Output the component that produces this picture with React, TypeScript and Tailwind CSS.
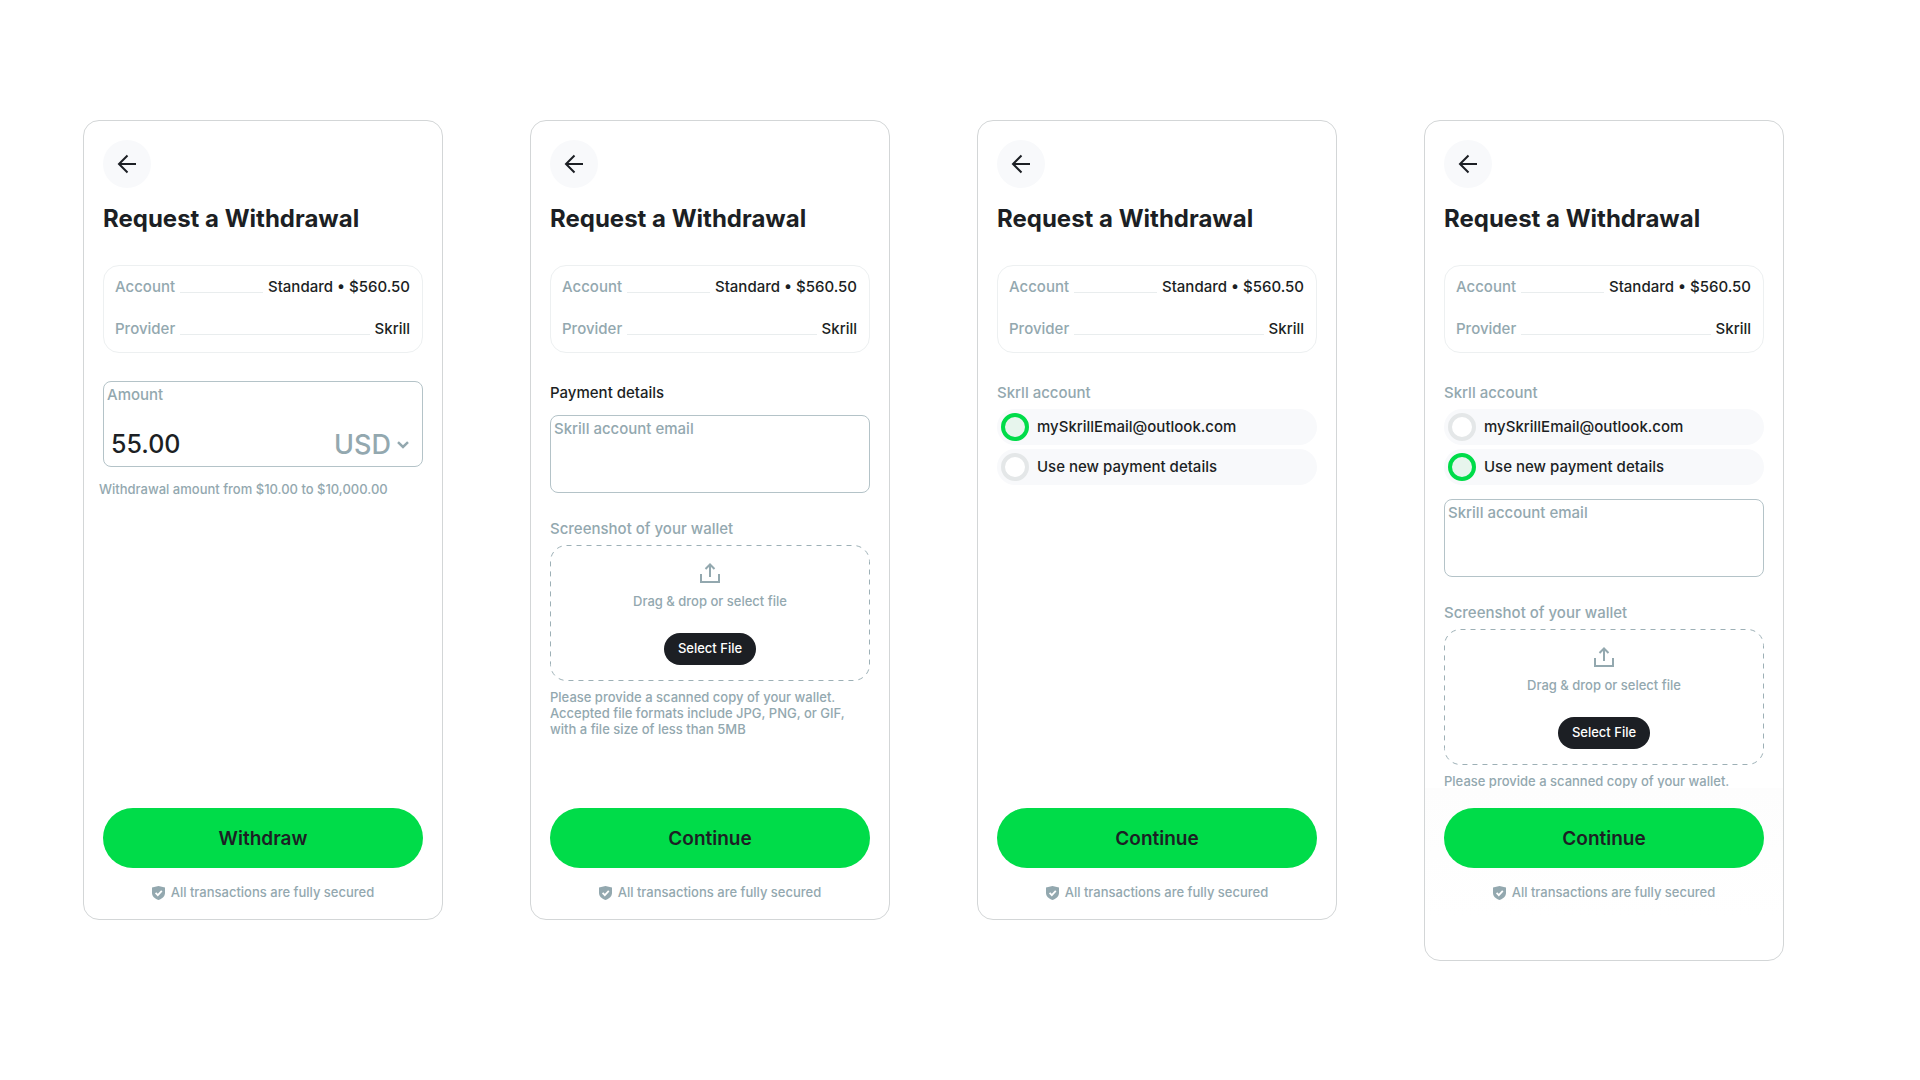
import { useId, useState } from 'react';
import type { ReactNode } from 'react';

const BackIcon = () => (
    <svg width="24" height="24" viewBox="0 0 24 24" fill="none" stroke="currentColor" strokeWidth="2" aria-hidden="true">
        <path d="M21 12H4M12.5 3.5L4 12l8.5 8.5" />
    </svg>
);

const UploadIcon = () => (
    <svg width="20" height="20" viewBox="0 0 20 20" fill="none" stroke="currentColor" strokeWidth="2" aria-hidden="true">
        <path d="M1 11v8h18v-8M10 14V1.5M5.5 6L10 1.5 14.5 6" />
    </svg>
);

const ShieldIcon = () => (
    <svg width="13" height="14" viewBox="0 0 13 14" aria-hidden="true">
        <path d="M6.5 0L13 1.6v5.2c0 3.6-2.6 6-6.5 7.2C2.6 12.8 0 10.4 0 6.8V1.6z" fill="currentColor" />
        <path d="M3.6 6.9l2.2 2.2 4-4.2" fill="none" stroke="#fff" strokeWidth="1.8" />
    </svg>
);

const SummaryRow = ({ label, value }: { label: string; value: string }) => (
    <div className="flex items-center gap-[5px] h-[42px]">
        <dt className="text-[#93a8af]">{label}</dt>
        <span className="flex-1 h-3 border-b border-[#e9edee]" />
        <dd>{value}</dd>
    </div>
);

const Screen = ({ action, tall = false, children }: { action: string; tall?: boolean; children: ReactNode }) => (
    <section className={`flex flex-col border border-[#d3d6d7] rounded-2xl ${tall ? 'pb-[42px]' : 'pb-px'}`}>
        <div className="h-[667px] overflow-hidden px-[19px] pt-[19px]">
            <button aria-label="Back" className="w-12 h-12 rounded-full bg-[#f8f9fb] flex items-center justify-center">
                <BackIcon />
            </button>
            <h1 className="mt-[13px] text-2xl leading-9 font-bold">Request a Withdrawal</h1>
            <dl className="mt-7 mb-7 border border-[#edf0f1] rounded-2xl pl-[11px] pr-3 pb-[2px]">
                <SummaryRow label="Account" value="Standard • $560.50" />
                <SummaryRow label="Provider" value="Skrill" />
            </dl>
            {children}
        </div>
        <footer className={`px-[19px] pt-5 ${tall ? 'bg-linear-to-b from-[#fdfdfd] to-white' : ''}`}>
            <button className="w-full h-[60px] pt-[2px] rounded-full bg-[#00dc49] text-[19px] font-semibold">{action}</button>
            <p className="flex items-center justify-center gap-[6px] h-[50px] text-[13px] text-[#93a8af]">
                <ShieldIcon />
                All transactions are fully secured
            </p>
        </footer>
    </section>
);

const AmountField = () => {
    const id = useId();
    return (
        <div>
            <div className="h-[86px] border border-[#b4c3c8] rounded-lg flex flex-col justify-between">
                <label htmlFor={id} className="px-[3px] pt-px leading-6 text-[#93a8af]">Amount</label>
                <div className="flex items-center justify-between pl-[7px] pr-[13px] pb-[3px]">
                    <input id={id} defaultValue="55.00" inputMode="decimal" className="w-32 h-9 text-[25px] outline-none" />
                    <div className="relative text-[#93a8af]">
                        <select aria-label="Currency" defaultValue="USD" className="appearance-none h-9 pr-[18px] bg-transparent text-[27px] leading-9 outline-none">
                            <option>USD</option>
                        </select>
                        <svg className="absolute right-0 top-[14px] pointer-events-none" width="12" height="8" viewBox="0 0 12 8" fill="none" stroke="currentColor" strokeWidth="2.5" aria-hidden="true">
                            <path d="M1 1.2l5 4.800 5-4.800" />
                        </svg>
                    </div>
                </div>
            </div>
            <p className="-ml-1 mt-3 leading-5 text-[13px] text-[#93a8af]">Withdrawal amount from $10.00 to $10,000.00</p>
        </div>
    );
};

const EmailField = () => {
    const id = useId();
    return (
        <div className="h-[78px] border border-[#b4c3c8] rounded-lg flex flex-col">
            <label htmlFor={id} className="px-[3px] pt-px leading-6 text-[#93a8af]">Skrill account email</label>
            <input id={id} type="email" className="flex-1 min-w-0 px-2 bg-transparent outline-none" />
        </div>
    );
};

const Upload = ({ hint }: { hint: string }) => (
    <div className="mt-6 text-[#93a8af]">
        <h2 className="leading-6">Screenshot of your wallet</h2>
        <div className="relative mt-1 h-[136px] flex flex-col items-center pt-[18px]">
            <svg className="absolute inset-0 w-full h-full pointer-events-none text-[#9db0b6]" aria-hidden="true">
                <rect x="0.5" y="0.5" rx="16" className="w-[calc(100%-1px)] h-[calc(100%-1px)]" fill="none" stroke="currentColor" strokeDasharray="5 5" />
            </svg>
            <UploadIcon />
            <p className="mt-2 leading-5 text-[13px]">Drag &amp; drop or select file</p>
            <button className="mt-[22px] h-8 px-[14px] rounded-full bg-[#1c1f24] text-white text-[13px]">Select File</button>
        </div>
        <p className="mt-2 text-[13px] leading-4">{hint}</p>
    </div>
);

const AccountPicker = ({ initial }: { initial: string }) => {
    const name = useId();
    const [selected, setSelected] = useState(initial);
    return (
        <fieldset>
            <legend className="leading-6 mb-1 text-[#93a8af]">Skrll account</legend>
            <div className="flex flex-col gap-1">
                {['mySkrillEmail@outlook.com', 'Use new payment details'].map((option) => (
                    <label key={option} className="flex items-center gap-2 h-9 pl-1 rounded-full bg-[#f8f9fb]">
                        <input
                            type="radio"
                            name={name}
                            checked={selected === option}
                            onChange={() => setSelected(option)}
                            className="appearance-none w-7 h-7 rounded-full border-4 border-[#e4e7e8] bg-white checked:border-[#00dc49] checked:bg-[#e7f5ed]"
                        />
                        {option}
                    </label>
                ))}
            </div>
        </fieldset>
    );
};

export default function App() {
    return (
        <main className="min-h-screen bg-white text-[#1c1f24] text-[15px] font-medium font-['Inter',sans-serif] grid grid-cols-4 items-start gap-[87px] pt-[120px] pb-[118px] pl-[83px] pr-[136px]">
            <Screen action="Withdraw">
                <AmountField />
            </Screen>
            <Screen action="Continue">
                <h2 className="leading-6 mb-[10px]">Payment details</h2>
                <EmailField />
                <Upload hint="Please provide a scanned copy of your wallet. Accepted file formats include JPG, PNG, or GIF, with a file size of less than 5MB" />
            </Screen>
            <Screen action="Continue">
                <AccountPicker initial="mySkrillEmail@outlook.com" />
            </Screen>
            <Screen action="Continue" tall>
                <AccountPicker initial="Use new payment details" />
                <div className="mt-[14px]">
                    <EmailField />
                </div>
                <Upload hint="Please provide a scanned copy of your wallet." />
            </Screen>
        </main>
    );
}
